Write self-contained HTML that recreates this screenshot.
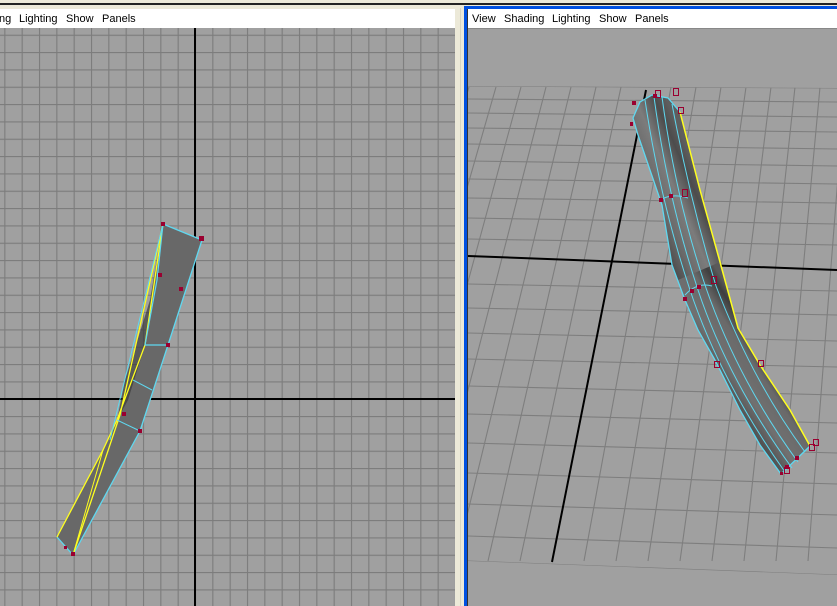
<!DOCTYPE html>
<html><head><meta charset="utf-8"><style>
html,body{margin:0;padding:0;width:837px;height:606px;overflow:hidden;background:#ece9d8;font-family:"Liberation Sans",sans-serif;}
.abs{position:absolute}
.menu{position:absolute;background:#fff;height:19px;font-size:11px;color:#000;}
.menu span{position:absolute;top:4px;white-space:nowrap}
</style></head><body>
<div class="abs" style="left:0;top:3px;width:837px;height:2px;background:#222"></div>
<!-- left panel -->
<div class="menu" style="left:0;top:9px;width:455px;">
<span style="left:-1px">ng</span><span style="left:19px">Lighting</span><span style="left:66px">Show</span><span style="left:102px">Panels</span></div>
<svg class="abs" style="left:0;top:28px" width="455" height="578">
<defs><pattern id="g" width="17.333" height="17.333" patternUnits="userSpaceOnUse" x="4.3" y="6.7">
<rect width="17.333" height="17.333" fill="#a0a0a0"/><path d="M0.5 0V17.333M0 0.5H17.333" stroke="#7c7c7c" stroke-width="1.2"/></pattern></defs>
<rect width="455" height="578" fill="url(#g)"/>
<line x1="195" y1="0" x2="195" y2="578" stroke="#000" stroke-width="2"/>
<line x1="0" y1="371" x2="455" y2="371" stroke="#000" stroke-width="2"/>
<g transform="translate(0,-28)">
<polygon points="163,224 202,240 168,345 140,431 73,555 57,537 103,450 117,420 145,345" fill="#686868"/>
<polygon points="163,224 145,345 128,400 117,420 125,380 150,300" fill="#3a3a3a" opacity="0.7"/>
<polyline points="163,224 202,240 168,345 140,431 73,555 57,537" fill="none" stroke="#5fd8f0" stroke-width="1.3"/>
<polyline points="57,537 103,450 117,420 145,345 163,224 120,415 73,555" fill="none" stroke="#ffff20" stroke-width="1.3"/>
<polyline points="163,224 157,280 145,345 168,345" fill="none" stroke="#5fd8f0" stroke-width="1.2"/>
<line x1="133" y1="380" x2="152" y2="390" stroke="#5fd8f0"/>
<line x1="117" y1="420" x2="140" y2="431" stroke="#5fd8f0"/>
<line x1="163" y1="224" x2="110" y2="440" stroke="#5fd8f0"/>
<line x1="103" y1="450" x2="73" y2="555" stroke="#ffff20"/>
<g fill="#9a0030"><rect x="161" y="222" width="4" height="4"/><rect x="199" y="236" width="5" height="5"/><rect x="158" y="273" width="4" height="4"/><rect x="179" y="287" width="4" height="4"/><rect x="166" y="343" width="4" height="4"/><rect x="122" y="412" width="4" height="4"/><rect x="138" y="429" width="4" height="4"/><rect x="71" y="552" width="4" height="4"/><rect x="64" y="546" width="3" height="3"/></g>
</g>
</svg>
<!-- divider -->
<div class="abs" style="left:460px;top:8px;width:1px;height:598px;background:#d8d4c0"></div>
<div class="abs" style="left:464px;top:6px;width:373px;height:600px;background:#0050e0"></div>
<div class="abs" style="left:467px;top:9px;width:1px;height:597px;background:#333"></div>
<div class="menu" style="left:468px;top:9px;width:369px;">
<span style="left:4px">View</span><span style="left:36px">Shading</span><span style="left:84px">Lighting</span><span style="left:131px">Show</span><span style="left:167px">Panels</span></div>
<svg class="abs" style="left:468px;top:28px" width="369" height="578">
<rect width="369" height="578" fill="#a0a0a0"/>
<line x1="0" y1="0.5" x2="369" y2="0.5" stroke="#888"/>
<g transform="translate(-468,-28)">
<defs><clipPath id="c"><polygon points="468,86 837,88 837,575 468,561"/></clipPath></defs>
<g clip-path="url(#c)" stroke="#7e7e7e" stroke-width="1.1" fill="none">
<path d="M468,86L837,88M468,99L837,102M468,113L837,117M468,128L837,132M468,144L837,149M468,161L837,166M468,179L837,184M468,198L837,203M468,218L837,224M468,239L837,245M468,284L837,291M468,308L837,315M468,333L837,341M468,359L837,367M468,386L837,395M468,414L837,423M468,443L837,453M468,473L837,484M468,504L837,515M468,536L837,548M468,561L837,575"/>
<path d="M168,561L346,87M200,561L371,87M232,561L395,87M264,561L419,87M296,561L446,87M328,561L469,87M360,561L496,87M392,561L521,87M424,561L546,87M456,561L571,87M488,561L596,87M520,561L621,87M584,561L671,87M616,561L696,87M648,561L721,87M680,561L746,87M712,561L771,87M744,561L795,87M776,561L820,87M808,561L845,87M840,561L870,87"/>
</g>
<line x1="468" y1="256" x2="837" y2="270" stroke="#000" stroke-width="2"/>
<line x1="646" y1="90" x2="552" y2="562" stroke="#000" stroke-width="2"/>
<defs>
<linearGradient id="t" gradientUnits="userSpaceOnUse" x1="650" y1="240" x2="715" y2="212"><stop offset="0" stop-color="#3a3a3a"/><stop offset="0.35" stop-color="#6a6a6a"/><stop offset="0.6" stop-color="#7c7c7c"/><stop offset="0.85" stop-color="#4c4c4c"/><stop offset="1" stop-color="#5e5e5e"/></linearGradient>
<linearGradient id="t2" gradientUnits="userSpaceOnUse" x1="730" y1="420" x2="790" y2="380"><stop offset="0" stop-color="#3a3a3a"/><stop offset="0.4" stop-color="#707070"/><stop offset="0.7" stop-color="#6a6a6a"/><stop offset="0.9" stop-color="#3e3e3e"/><stop offset="1" stop-color="#5a5a5a"/></linearGradient>
</defs>
<polygon points="633,118 640,102 652,95 668,98 680,112 700,190 720,262 738,328 760,365 790,410 810,446 790,466 781,474 760,445 740,410 715,360 698,330 685,300 672,265 662,205 638,135" fill="url(#t)"/>
<polygon points="720,262 738,328 760,365 790,410 810,446 790,466 781,474 760,445 740,410 715,360 698,330 685,300 678,280" fill="url(#t2)"/>
<polyline points="680,112 700,190 720,262 738,328 760,365 790,410 810,446" fill="none" stroke="#ffff20" stroke-width="1.5"/>
<polyline points="633,118 640,102 652,95 668,98 680,112" fill="none" stroke="#5fd8f0" stroke-width="1.3"/>
<polyline points="810,446 781,474 760,445 740,410 715,360 698,330 685,300 672,265 662,205 638,135 633,118" fill="none" stroke="#5fd8f0" stroke-width="1.3"/>
<g fill="none" stroke="#5fd8f0" stroke-width="1">
<path d="M645,100Q660,200 690,290Q720,380 785,472"/>
<path d="M654,97Q668,200 698,290Q728,380 792,468"/>
<path d="M662,97Q676,200 706,288Q738,380 798,462"/>
<path d="M672,104Q690,200 716,286Q752,380 805,452"/>
<path d="M660,200Q672,193 688,198M685,295Q697,282 712,286"/>
</g>
<g fill="#9a0030"><rect x="653" y="94" width="4" height="4"/><rect x="632" y="101" width="4" height="4"/><rect x="630" y="122" width="3" height="4"/><rect x="659" y="198" width="4" height="4"/><rect x="669" y="194" width="4" height="4"/><rect x="690" y="289" width="4" height="4"/><rect x="697" y="285" width="4" height="4"/><rect x="683" y="297" width="4" height="4"/><rect x="795" y="456" width="4" height="4"/><rect x="785" y="465" width="4" height="4"/><rect x="780" y="472" width="3" height="3"/></g>
<g fill="none" stroke="#9a0030" stroke-width="1"><rect x="655.5" y="90.5" width="5" height="7"/><rect x="673.5" y="88.5" width="5" height="7"/><rect x="678.5" y="107.5" width="5" height="6"/><rect x="682.5" y="189.5" width="5" height="7"/><rect x="711.5" y="276.5" width="5" height="7"/><rect x="714.5" y="361.5" width="5" height="6"/><rect x="758.5" y="360.5" width="5" height="6"/><rect x="809.5" y="444.5" width="5" height="6"/><rect x="813.5" y="439.5" width="5" height="6"/><rect x="784.5" y="467.5" width="5" height="6"/></g>
</g>
</svg>
</body></html>
